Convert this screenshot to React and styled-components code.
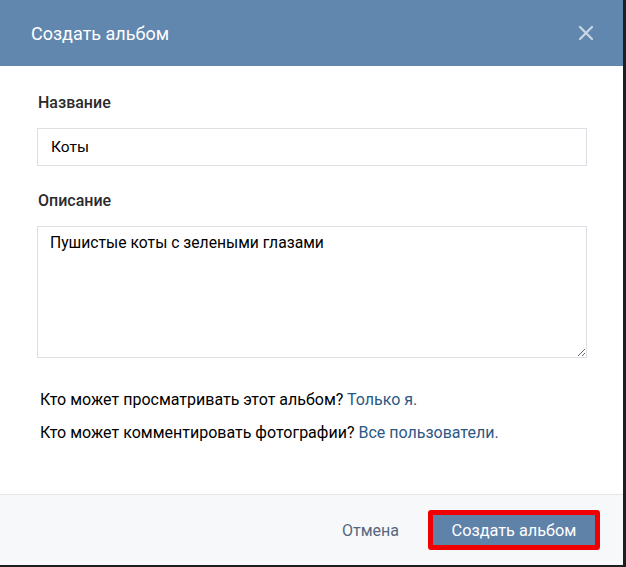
import React from 'react'
import styled, { createGlobalStyle } from 'styled-components'

const GlobalStyle = createGlobalStyle`
  html, body {
    margin: 0;
    padding: 0;
    background: #1e1e1e;
  }
  body {
    font-family: Roboto, 'Open Sans', Arial, sans-serif;
  }
`

const Modal = styled.div`
  width: 623px;
  height: 565px;
  background: #fff;
  display: flex;
  flex-direction: column;
`

const Header = styled.div`
  height: 66px;
  flex-shrink: 0;
  background: #6287ae;
  display: flex;
  align-items: center;
  justify-content: space-between;
  padding: 0 29px 0 31px;
  box-sizing: border-box;
`

const Title = styled.h1`
  margin: 0;
  font-size: 18px;
  font-weight: 400;
  color: #fff;
  padding-top: 1px;
`

const Close = styled.button`
  border: none;
  background: none;
  padding: 0;
  width: 16px;
  height: 16px;
  display: flex;
  cursor: pointer;
`

const Body = styled.div`
  flex: 1;
  padding: 27px 36px 0 37px;
  display: flex;
  flex-direction: column;
`

const Label = styled.div`
  font-size: 16px;
  line-height: 20px;
  font-weight: 500;
  color: #2b2b2b;
  margin-top: ${p => p.$top || 0}px;
  margin-bottom: 15px;
  padding-left: 1px;
`

const Input = styled.input`
  width: 100%;
  height: 38px;
  box-sizing: border-box;
  border: 1px solid #dcdfe3;
  padding: 0 13px;
  font-family: inherit;
  font-size: 15.5px;
  color: #000;
  outline: none;
`

const TextArea = styled.textarea`
  width: 100%;
  height: 132px;
  box-sizing: border-box;
  border: 1px solid #dcdfe3;
  padding: 6px 12px;
  font-family: inherit;
  font-size: 15.7px;
  line-height: 20px;
  color: #000;
  resize: vertical;
  outline: none;
  display: block;
`

const Privacy = styled.div`
  margin-top: 32px;
  display: flex;
  flex-direction: column;
  gap: 13px;
  padding-left: 3px;
`

const Line = styled.div`
  font-size: 16px;
  line-height: 20px;
  color: #000;
`

const Link = styled.a`
  color: #2a5885;
  text-decoration: none;
  cursor: pointer;
`

const Footer = styled.div`
  height: 71px;
  flex-shrink: 0;
  box-sizing: border-box;
  border-top: 1px solid #e4e6ea;
  background: #f7f8fa;
  display: flex;
  align-items: center;
  justify-content: flex-end;
  padding-right: 23px;
  gap: 29px;
`

const Cancel = styled.button`
  border: none;
  background: none;
  padding: 0;
  font-family: inherit;
  font-size: 16px;
  color: #55677d;
  cursor: pointer;
`

const Highlight = styled.div`
  border: 5px solid #f00000;
  border-radius: 3px;
  display: flex;
`

const Primary = styled.button`
  border: none;
  background: #5f82a9;
  color: #fff;
  font-family: inherit;
  font-size: 16.3px;
  height: 30px;
  width: 162px;
  padding: 0;
  cursor: pointer;
`

export default function App() {
  return (
    <>
      <GlobalStyle />
      <Modal>
        <Header>
          <Title>Создать альбом</Title>
          <Close>
            <svg width="16" height="16" viewBox="0 0 16 16">
              <path d="M2 2L14 14M14 2L2 14" stroke="#c9d7e6" strokeWidth="2.2" strokeLinecap="round" />
            </svg>
          </Close>
        </Header>
        <Body>
          <Label>Название</Label>
          <Input defaultValue="Коты" />
          <Label $top={25}>Описание</Label>
          <TextArea defaultValue="Пушистые коты с зелеными глазами" />
          <Privacy>
            <Line>Кто может просматривать этот альбом? <Link>Только я.</Link></Line>
            <Line>Кто может комментировать фотографии? <Link>Все пользователи.</Link></Line>
          </Privacy>
        </Body>
        <Footer>
          <Cancel>Отмена</Cancel>
          <Highlight>
            <Primary>Создать альбом</Primary>
          </Highlight>
        </Footer>
      </Modal>
    </>
  )
}
